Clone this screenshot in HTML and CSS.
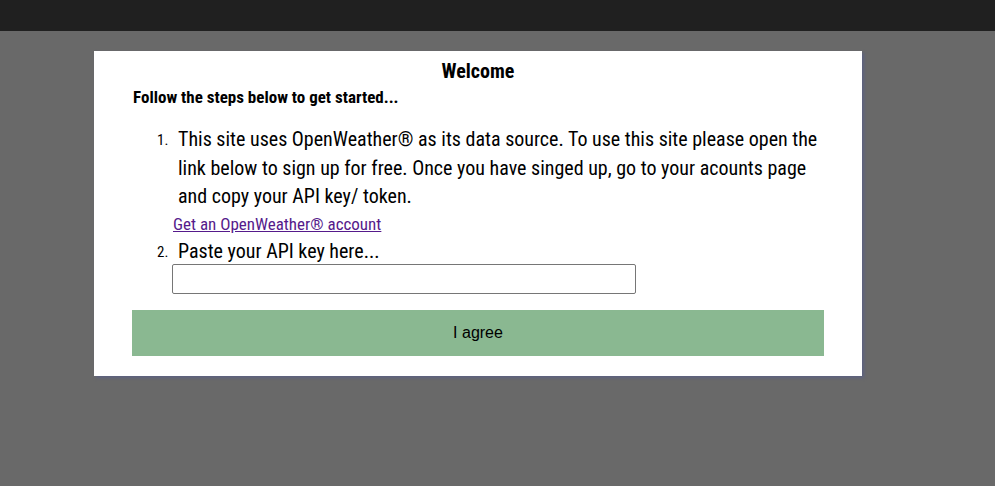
FILE: index.html
```html
<!DOCTYPE html>
<html lang="en">
<head>
<meta charset="utf-8">
<title>Welcome</title>
<link rel="stylesheet" href="styles.css">
</head>
<body>
<header class="topbar"></header>
<div class="overlay">
  <div class="modal">
    <h1 class="title">Welcome</h1>
    <p class="subtitle">Follow the steps below to get started...</p>
    <ol class="steps">
      <li class="step">
        <span class="step-text">This site uses OpenWeather® as its data source. To use this site please open the link below to sign up for free. Once you have singed up, go to your acounts page and copy your API key/ token.</span>
      </li>
      <li class="link-row"><a class="link" href="#">Get an OpenWeather® account</a></li>
      <li class="step step-2">
        <span class="step-text">Paste your API key here...</span>
      </li>
      <li class="input-row"><input class="key-input" type="text"></li>
    </ol>
    <button class="agree" type="button">I agree</button>
  </div>
</div>
</body>
</html>
```
FILE: styles.css
```css
html, body { margin: 0; height: 100%; }
body {
  background: #696969;
  font-family: "Roboto Condensed", "Liberation Sans Narrow", sans-serif;
  color: #000;
  overflow: hidden;
}
.topbar {
  height: 31px;
  background: #202020;
}
.overlay {
  padding: 20px 0 0 94px;
}
.modal {
  width: 692px;
  padding: 10px 38px 20px 38px;
  background: #fff;
  box-shadow: 2px 2px 3px #5d6281;
}
.title {
  margin: 0;
  text-align: center;
  font-size: 20px;
  line-height: 21px;
  font-weight: 700;
}
.subtitle {
  margin: 5px 0 0 1px;
  font-size: 17px;
  line-height: 20px;
  font-weight: 700;
}
.steps {
  margin: 18px 0 0 0;
  padding: 0 0 0 46px;
  list-style: none;
  counter-reset: step;
}
.step {
  counter-increment: step;
  position: relative;
  font-size: 20px;
  line-height: 28.5px;
}
.step::before {
  content: counter(step) ".";
  position: absolute;
  left: -21px;
  top: 1px;
  font-size: 15px;
}
.link-row {
  margin-left: -5px;
  padding: 3px 0 4px;
  line-height: 20px;
}
.link {
  color: #551a8b;
  font-size: 17px;
}
.step-2 {
  line-height: 24px;
}
.input-row {
  margin: 1px 0 0 -6px;
}
.key-input {
  display: block;
  box-sizing: border-box;
  width: 464px;
  height: 30px;
  margin: 0;
  border: 1px solid #767676;
  border-radius: 2px;
  background: #fff;
}
.agree {
  display: block;
  width: 100%;
  height: 46px;
  margin-top: 16px;
  border: 0;
  background: #8ab891;
  font-family: "Liberation Sans", Arial, sans-serif;
  font-size: 16px;
  color: #000;
}
```
